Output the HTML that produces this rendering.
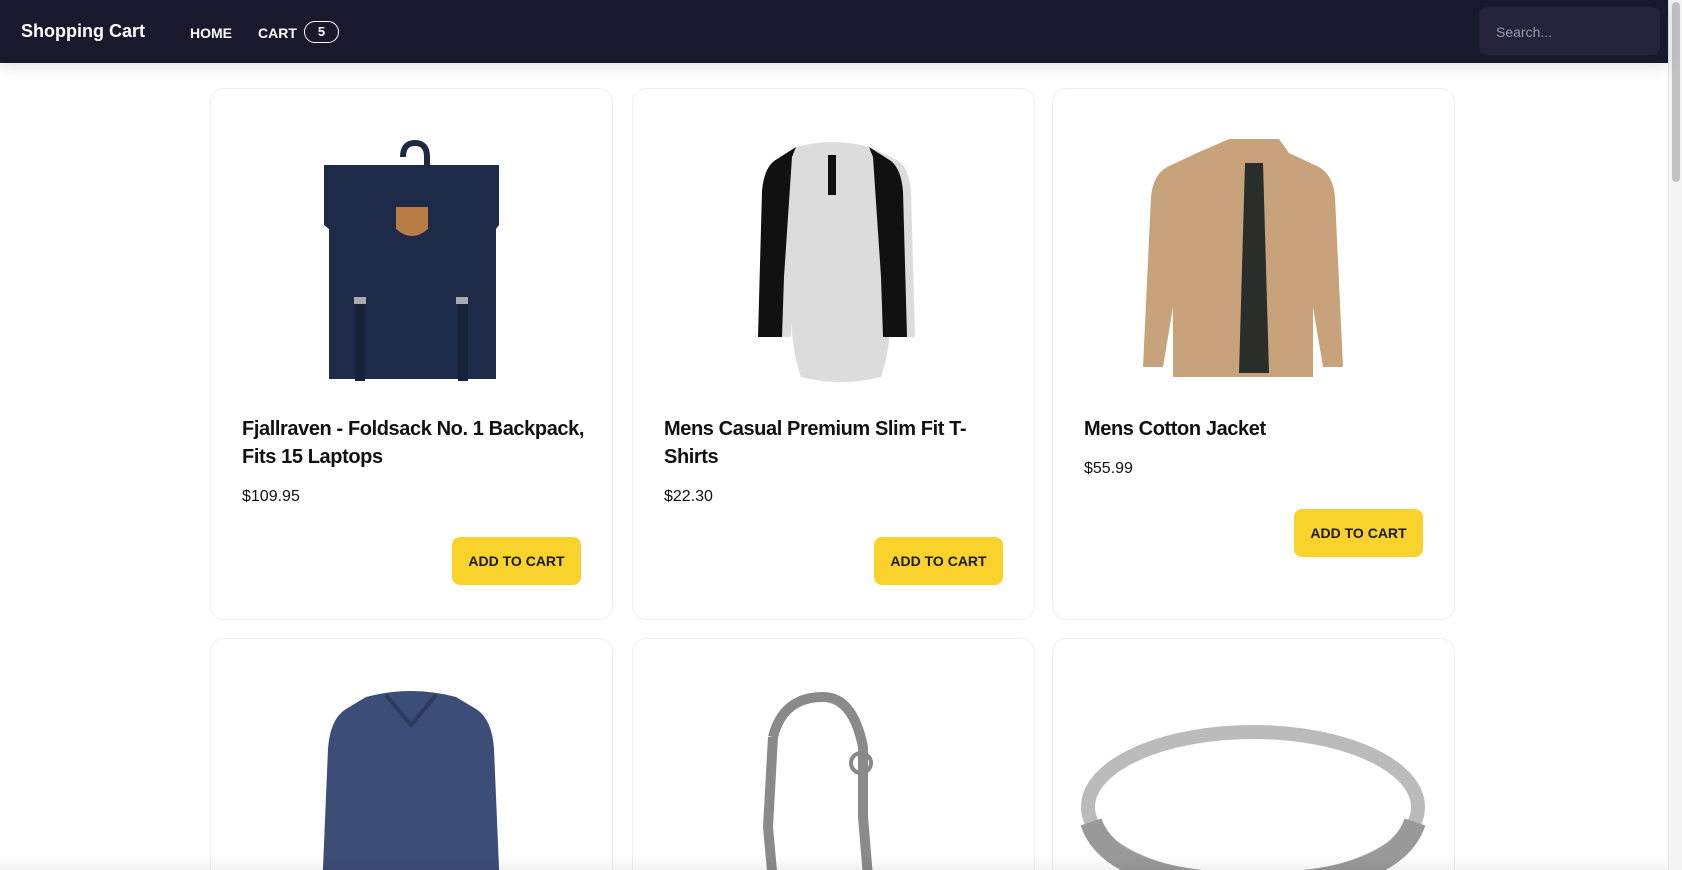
<!DOCTYPE html>
<html style="height:870px;overflow:hidden"><head><meta charset="utf-8"><style>
*{margin:0;padding:0;box-sizing:border-box}
html,body{width:1682px;height:870px;overflow:hidden}
body{background:#fff;font-family:"Liberation Sans",Arial,sans-serif;position:relative;color:#111}
.nav{position:absolute;left:0;top:0;width:1668px;height:63px;background:#19192d;box-shadow:0 4px 14px rgba(0,0,0,.12);z-index:2}
.brand{position:absolute;left:21px;top:21px;color:#fff;font-weight:bold;font-size:18px}
.lnk{position:absolute;top:25px;color:#fff;font-weight:bold;font-size:14px}
.badge{position:absolute;left:304px;top:21px;width:35px;height:22px;border:1.5px solid #fff;border-radius:11px;color:#fff;font-weight:bold;font-size:13px;text-align:center;line-height:19px}
.search{position:absolute;left:1479px;top:7px;width:181px;height:48px;background:#24233a;border-radius:8px;color:#9a99aa;font-size:14px;padding:17px 0 0 17px}
.sb{position:absolute;left:1668px;top:0;width:14px;height:870px;background:#f4f4f4;border-left:1px solid #e6e6e6}
.thumb{position:absolute;left:1672px;top:2px;width:8px;height:180px;background:#c2c2c2;border-radius:4px}
.card{position:absolute;width:403px;height:532px;border:1px solid #efefef;border-radius:14px;background:#fff;overflow:hidden}
.r2{height:232px;border-bottom:none;border-radius:14px 14px 0 0}
.img{position:absolute;left:0;top:38px;width:401px;height:256px}
.t{position:absolute;left:31px;top:326px;width:350px;font-size:20px;font-weight:bold;line-height:28px;color:#111;letter-spacing:-0.4px}
.p{position:absolute;left:31px;font-size:16px;color:#111}
.btn{position:absolute;right:31px;width:129px;height:48px;background:#fad22c;border-radius:8px;font-size:14px;font-weight:bold;text-align:center;line-height:48px;color:#1a1a1a}
.fade{position:absolute;left:0;top:856px;width:1668px;height:14px;background:linear-gradient(rgba(255,255,255,0),rgba(0,0,0,.05))}
</style></head><body>
<div class="nav">
<div class="brand">Shopping Cart</div>
<div class="lnk" style="left:190px">HOME</div>
<div class="lnk" style="left:258px">CART</div>
<div class="badge">5</div>
<div class="search">Search...</div>
</div>
<div class="sb"></div><div class="thumb"></div>

<div class="card" style="left:210px;top:88px">
<svg class="img" viewBox="0 0 401 256"><path d="M192 30 q0-14 12-14 q12 0 12 14 v10" fill="none" stroke="#1c2945" stroke-width="6"/><path d="M113 38 h175 v60 l-3 4 v150 H118 V102 l-5-4z" fill="#1d2a48"/><rect x="144" y="174" width="10" height="80" fill="#16213b"/><rect x="247" y="174" width="10" height="80" fill="#16213b"/><rect x="143" y="170" width="12" height="7" fill="#aaa"/><rect x="245" y="170" width="12" height="7" fill="#aaa"/><path d="M185 80 h32 v22 q-16 14-32 0z" fill="#b87c45"/></svg>
<div class="t">Fjallraven - Foldsack No. 1 Backpack, Fits 15 Laptops</div>
<div class="p" style="top:399px">$109.95</div>
<div class="btn" style="top:448px">ADD TO CART</div>
</div>

<div class="card" style="left:632px;top:88px">
<svg class="img" viewBox="0 0 401 256"><path d="M163 20 q37-10 73 0 l30 14 q10 8 12 30 l4 146 h-24 l-2-60 q6 60 -8 100 q-40 10-80 0 q-14-40-8-100 l-2 60 h-24 l4-146 q2-22 12-30z" fill="#dcdcdc"/><path d="M163 20 l-22 14 q-10 8-12 30 l-4 146 h24 l2-60 l8-120z M236 20 l22 14 q10 8 12 30 l4 146 h-24 l-2-60 l-8-120z" fill="#111"/><rect x="195" y="28" width="8" height="40" fill="#111"/></svg>
<div class="t">Mens Casual Premium Slim Fit T-Shirts</div>
<div class="p" style="top:399px">$22.30</div>
<div class="btn" style="top:448px">ADD TO CART</div>
</div>

<div class="card" style="left:1052px;top:88px">
<svg class="img" viewBox="0 0 401 256"><path d="M176 12 h50 l10 14 l30 14 q14 8 16 30 l8 170 h-20 l-10-60 v70 h-140 v-70 l-10 60 h-20 l8-170 q2-22 16-30 l30-14z" fill="#c8a27a"/><path d="M192 36 h18 l6 210 h-30z" fill="#2a2e2a"/></svg>
<div class="t">Mens Cotton Jacket</div>
<div class="p" style="top:371px">$55.99</div>
<div class="btn" style="top:420px">ADD TO CART</div>
</div>

<div class="card r2" style="left:210px;top:638px">
<svg class="img" viewBox="0 0 401 256"><path d="M155 20 q45-12 90 0 l20 12 q16 10 18 40 l8 190 H109 l8-190 q2-30 18-40z" fill="#3c4d77"/><path d="M175 18 l25 30 l25-30" fill="none" stroke="#2c3a5e" stroke-width="4"/></svg>
</div>
<div class="card r2" style="left:632px;top:638px">
<svg class="img" viewBox="0 0 401 256"><path d="M140 60 q10-40 50-40 q30 0 40 50 v70 l10 120 M140 60 l-5 90 l10 110" fill="none" stroke="#8a8a8a" stroke-width="10"/><circle cx="228" cy="86" r="10" fill="none" stroke="#888" stroke-width="4"/></svg>
</div>
<div class="card r2" style="left:1052px;top:638px">
<svg class="img" viewBox="0 0 401 256"><ellipse cx="200" cy="130" rx="165" ry="75" fill="none" stroke="#bbb" stroke-width="14"/><path d="M38 145 q20 60 162 62 q142-2 162-62" fill="none" stroke="#999" stroke-width="22"/></svg>
</div>
<div class="fade"></div>
</body></html>
